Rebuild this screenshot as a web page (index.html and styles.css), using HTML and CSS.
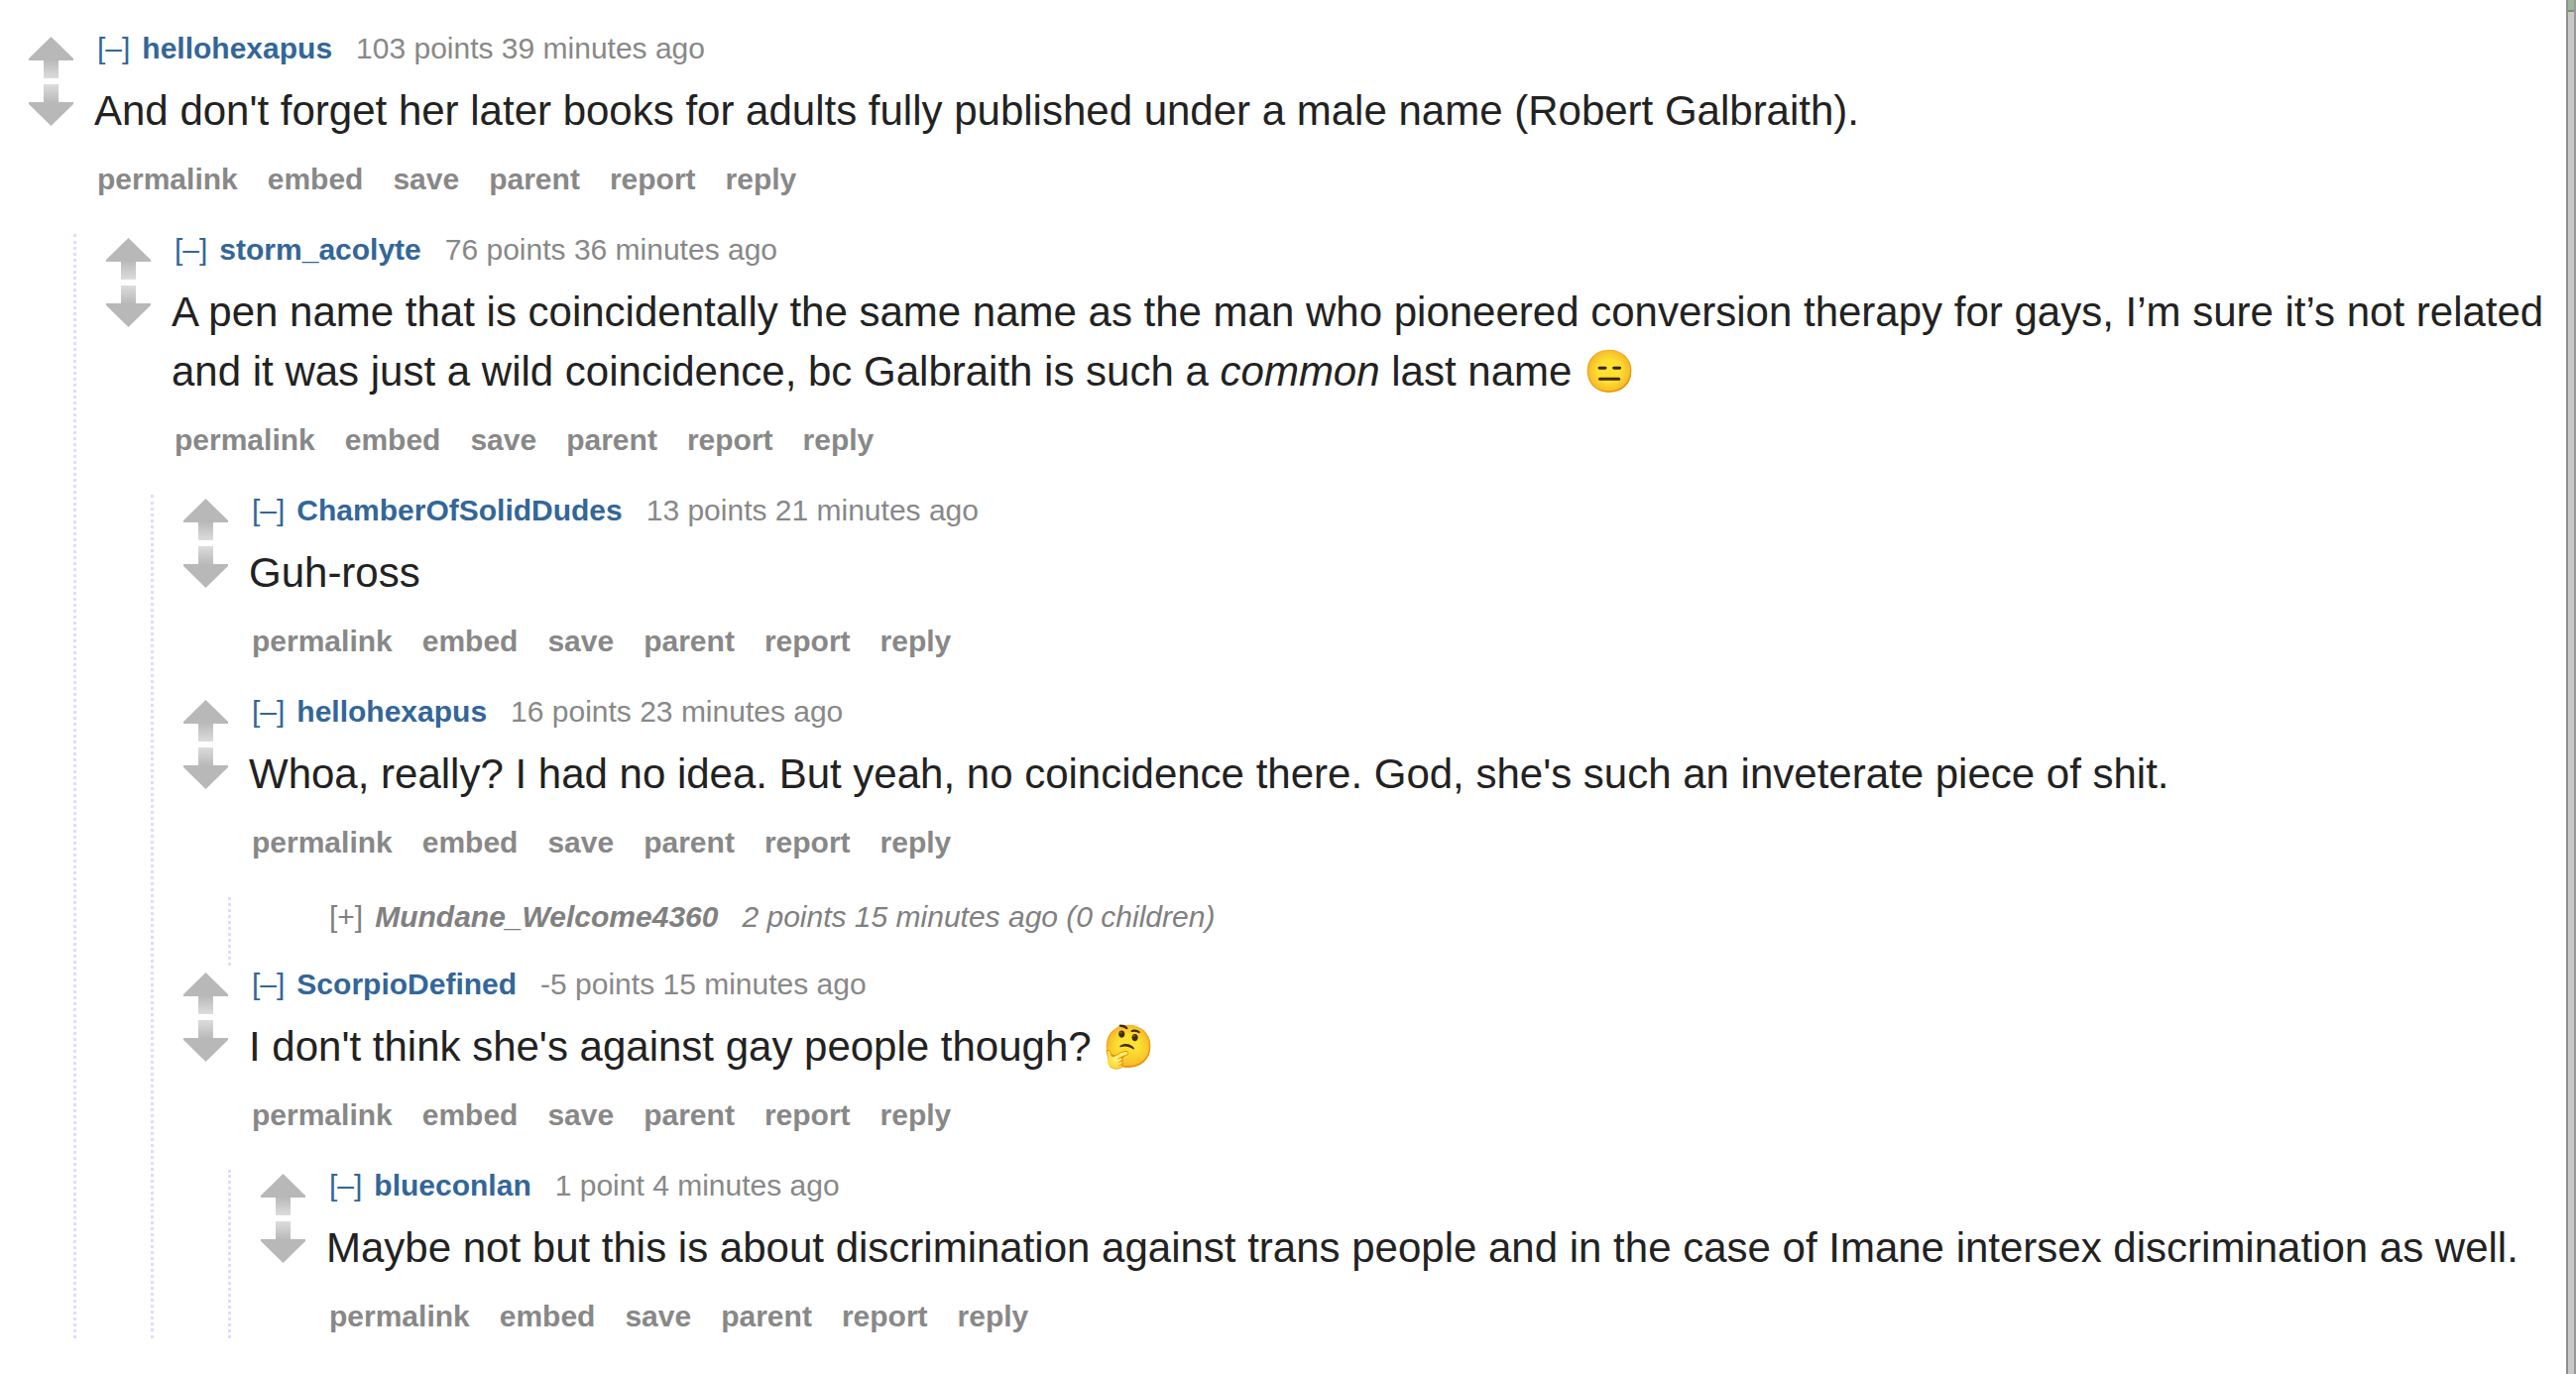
FILE: index.html
```html
<!DOCTYPE html>
<html lang="en">
<head>
    <meta charset="UTF-8">
    <meta name="viewport" content="width=device-width, initial-scale=1.0">
    <title>Comments</title>
    <link rel="stylesheet" href="styles.css">
</head>
<body>
    <svg class="defs" width="0" height="0" aria-hidden="true">
        <defs>
            <linearGradient id="fade" x1="0" y1="0" x2="0" y2="1">
                <stop offset="0.55" stop-color="#b8b8b8"/>
                <stop offset="1" stop-color="#dcdcdc"/>
            </linearGradient>
            <symbol id="arrow" viewBox="0 0 45 42">
                <path d="M22.5 0 L45 22 V24 H30 V42 H15 V24 H0 V22 Z" fill="url(#fade)"/>
            </symbol>
        </defs>
    </svg>
    <div class="page">
        <main class="thread">
            <div class="comment">
                <div class="entry">
                    <div class="votes">
                        <button class="vote" aria-label="upvote"><svg><use href="#arrow"/></svg></button>
                        <button class="vote down" aria-label="downvote"><svg><use href="#arrow"/></svg></button>
                    </div>
                    <div class="content">
                        <p class="tagline"><a href="#" class="expand">[–]</a><a href="#" class="author">hellohexapus</a><span>103 points 39 minutes ago</span></p>
                        <p class="text">And don't forget her later books for adults fully published under a male name (Robert Galbraith).</p>
                        <div class="buttons"><a href="#">permalink</a><a href="#">embed</a><a href="#">save</a><a href="#">parent</a><a href="#">report</a><a href="#">reply</a></div>
                    </div>
                </div>
                <div class="child">
                    <div class="comment">
                        <div class="entry">
                            <div class="votes">
                                <button class="vote" aria-label="upvote"><svg><use href="#arrow"/></svg></button>
                                <button class="vote down" aria-label="downvote"><svg><use href="#arrow"/></svg></button>
                            </div>
                            <div class="content">
                                <p class="tagline"><a href="#" class="expand">[–]</a><a href="#" class="author">storm_acolyte</a><span>76 points 36 minutes ago</span></p>
                                <p class="text">A pen name that is coincidentally the same name as the man who pioneered conversion therapy for gays, I’m sure it’s not related and it was just a wild coincidence, bc Galbraith is such a <em>common</em> last name 😑</p>
                                <div class="buttons"><a href="#">permalink</a><a href="#">embed</a><a href="#">save</a><a href="#">parent</a><a href="#">report</a><a href="#">reply</a></div>
                            </div>
                        </div>
                        <div class="child">
                            <div class="comment">
                                <div class="entry">
                                    <div class="votes">
                                        <button class="vote" aria-label="upvote"><svg><use href="#arrow"/></svg></button>
                                        <button class="vote down" aria-label="downvote"><svg><use href="#arrow"/></svg></button>
                                    </div>
                                    <div class="content">
                                        <p class="tagline"><a href="#" class="expand">[–]</a><a href="#" class="author">ChamberOfSolidDudes</a><span>13 points 21 minutes ago</span></p>
                                        <p class="text">Guh-ross</p>
                                        <div class="buttons"><a href="#">permalink</a><a href="#">embed</a><a href="#">save</a><a href="#">parent</a><a href="#">report</a><a href="#">reply</a></div>
                                    </div>
                                </div>
                            </div>
                            <div class="comment">
                                <div class="entry">
                                    <div class="votes">
                                        <button class="vote" aria-label="upvote"><svg><use href="#arrow"/></svg></button>
                                        <button class="vote down" aria-label="downvote"><svg><use href="#arrow"/></svg></button>
                                    </div>
                                    <div class="content">
                                        <p class="tagline"><a href="#" class="expand">[–]</a><a href="#" class="author">hellohexapus</a><span>16 points 23 minutes ago</span></p>
                                        <p class="text">Whoa, really? I had no idea. But yeah, no coincidence there. God, she's such an inveterate piece of shit.</p>
                                        <div class="buttons"><a href="#">permalink</a><a href="#">embed</a><a href="#">save</a><a href="#">parent</a><a href="#">report</a><a href="#">reply</a></div>
                                    </div>
                                </div>
                                <div class="child">
                                    <div class="comment collapsed">
                                        <p class="tagline"><a href="#" class="expand">[+]</a><a href="#" class="author">Mundane_Welcome4360</a><span>2 points 15 minutes ago (0 children)</span></p>
                                    </div>
                                </div>
                            </div>
                            <div class="comment">
                                <div class="entry">
                                    <div class="votes">
                                        <button class="vote" aria-label="upvote"><svg><use href="#arrow"/></svg></button>
                                        <button class="vote down" aria-label="downvote"><svg><use href="#arrow"/></svg></button>
                                    </div>
                                    <div class="content">
                                        <p class="tagline"><a href="#" class="expand">[–]</a><a href="#" class="author">ScorpioDefined</a><span>-5 points 15 minutes ago</span></p>
                                        <p class="text">I don't think she's against gay people though? 🤔</p>
                                        <div class="buttons"><a href="#">permalink</a><a href="#">embed</a><a href="#">save</a><a href="#">parent</a><a href="#">report</a><a href="#">reply</a></div>
                                    </div>
                                </div>
                                <div class="child">
                                    <div class="comment">
                                        <div class="entry">
                                            <div class="votes">
                                                <button class="vote" aria-label="upvote"><svg><use href="#arrow"/></svg></button>
                                                <button class="vote down" aria-label="downvote"><svg><use href="#arrow"/></svg></button>
                                            </div>
                                            <div class="content">
                                                <p class="tagline"><a href="#" class="expand">[–]</a><a href="#" class="author">blueconlan</a><span>1 point 4 minutes ago</span></p>
                                                <p class="text">Maybe not but this is about discrimination against trans people and in the case of Imane intersex discrimination as well.</p>
                                                <div class="buttons"><a href="#">permalink</a><a href="#">embed</a><a href="#">save</a><a href="#">parent</a><a href="#">report</a><a href="#">reply</a></div>
                                            </div>
                                        </div>
                                    </div>
                                </div>
                            </div>
                        </div>
                    </div>
                </div>
            </div>
        </main>
        <div class="edge"><div class="edge-top"></div></div>
    </div>
</body>
</html>
```

FILE: styles.css
```css
body {
    margin: 0;
    background-color: #fff;
    font-family: "Liberation Sans", Arial, "Noto Color Emoji", sans-serif;
    font-size: 30px;
    line-height: 32px;
    color: #222;
}

p {
    margin: 0;
}

a {
    color: #369;
    text-decoration: none;
}

.defs {
    position: absolute;
}

.page {
    display: flex;
    min-height: 100vh;
}

.thread {
    flex: 1;
    min-width: 0;
    padding: 33px 0 0 29px;
}

/* bottom margins collapse, so the dotted lines stop at the last entry */
.entry {
    display: flex;
    gap: 21px;
    margin-bottom: 33px;
}

.child {
    margin-left: 45px;
    padding-left: 30px;
    border-left: 3px dotted #ddf;
}

.votes {
    display: flex;
    flex-direction: column;
    gap: 6px;
    padding-top: 4px;
}

.vote {
    display: block;
    width: 45px;
    height: 42px;
    padding: 0;
    border: none;
    background: none;
    cursor: pointer;
}

.vote svg {
    display: block;
    width: 45px;
    height: 42px;
}

.down svg {
    transform: scaleY(-1);
}

.content {
    flex: 1;
    min-width: 0;
    padding-bottom: 6px;
}

.tagline {
    padding-left: 3px;
    color: #888;
}

.expand {
    margin-right: 12px;
}

.author {
    margin-right: 24px;
    font-weight: bold;
}

.text {
    margin-top: 17px;
    font-size: 42px;
    line-height: 60px;
}

.buttons {
    display: flex;
    gap: 30px;
    margin-top: 23px;
    padding-left: 3px;
}

.buttons a {
    color: #888;
    font-weight: bold;
}

.collapsed {
    margin-bottom: 3px;
    padding: 4px 0 33px 66px;
}

.collapsed .tagline,
.collapsed a {
    color: #808080;
}

.collapsed .author,
.collapsed span {
    font-style: italic;
}

.edge {
    box-sizing: border-box;
    width: 10px;
    background-color: #c8c8c8;
    border-left: 2px solid #8f8f8f;
    border-right: 2px solid #999;
}

.edge-top {
    height: 10px;
    background-color: #9cb59c;
    border-bottom: 2px solid #7a8f7a;
}
```
